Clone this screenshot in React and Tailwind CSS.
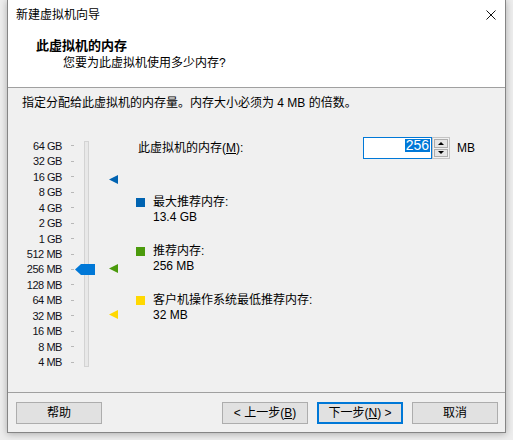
import React from "react";

const labels = ["64 GB","32 GB","16 GB","8 GB","4 GB","2 GB","1 GB","512 MB","256 MB","128 MB","64 MB","32 MB","16 MB","8 MB","4 MB"];

function Tri({ color, top }) {
  return (
    <svg className="absolute left-0" style={{ top }} width="9" height="9" viewBox="0 0 9 9">
      <polygon points="0,4.5 9,0 9,9" fill={color} />
    </svg>
  );
}

function Btn({ children, primary }) {
  return (
    <div
      className={
        "w-[86px] h-[22px] flex items-center justify-center bg-[#e1e1e1] text-[12px] leading-[16px] text-black " +
        (primary ? "border-2 border-[#0078d7]" : "border border-[#adadad]")
      }
    >
      {children}
    </div>
  );
}

export default function App() {
  return (
    <div className="w-[513px] h-[440px] bg-[#ededed] font-['Liberation_Sans','Noto_Sans_CJK_SC',sans-serif] text-black text-[12px] overflow-hidden">
      <div className="ml-[7px] w-[499px] h-[433px] border-x border-b border-[#858585] bg-[#f0f0f0] flex flex-col shadow-[0_1px_7px_rgba(0,0,0,0.28)]">
        {/* title bar */}
        <div className="h-[30px] bg-white flex items-center justify-between pl-[8px]">
          <span className="leading-[16px]">新建虚拟机向导</span>
          <svg className="mr-[9px]" width="10" height="10" viewBox="0 0 10 10">
            <path d="M0.5 0.5 L9.5 9.5 M9.5 0.5 L0.5 9.5" stroke="#111" strokeWidth="1" fill="none" />
          </svg>
        </div>
        {/* header */}
        <div className="h-[57px] bg-white pl-[28px] pt-[8px] flex flex-col">
          <span className="text-[13px] font-bold leading-[16px]">此虚拟机的内存</span>
          <span className="ml-[27px] mt-[1px] leading-[16px]">您要为此虚拟机使用多少内存?</span>
        </div>
        <div className="h-px bg-[#a0a0a0]" />
        {/* body */}
        <div className="h-[304px] flex flex-col">
          <div className="pl-[14px] pt-[7px] leading-[16px]">指定分配给此虚拟机的内存量。内存大小必须为 4 MB 的倍数。</div>
          <div className="mt-[27px] flex items-start">
            {/* ruler */}
            <div className="flex flex-col">
              {labels.map((l) => (
                <div key={l} className="h-[15.47px] flex items-center">
                  <span className="w-[54px] text-right text-[11px] tracking-[-0.45px] leading-[12px] text-[#101018]">{l}</span>
                  <span className="ml-[9px] w-[3px] h-px bg-[#b8b8b8]" />
                </div>
              ))}
            </div>
            {/* track */}
            <div className="relative ml-[10px] mt-[3px] w-[5px] h-[226px] border border-[#d3d3d3] bg-[#e8e8e8]">
              <svg className="absolute left-[-10px] top-[122px]" width="20" height="11" viewBox="0 0 20 11">
                <polygon points="0,5.5 6,0 20,0 20,11 6,11" fill="#0078d7" />
              </svg>
            </div>
            {/* markers */}
            <div className="relative ml-[20px] w-[9px] h-[232px]">
              <Tri color="#0063b1" top={37} />
              <Tri color="#4b9a0c" top={126} />
              <Tri color="#ffd800" top={172} />
            </div>
            {/* right section */}
            <div className="ml-[18px] flex flex-col">
              <div className="mt-[-1px] h-[22px] flex items-center">
                <span className="pl-[2px] w-[227px] leading-[16px]">
                  此虚拟机的内存(<span className="underline">M</span>):
                </span>
                <div className="w-[69px] h-[22px] border border-[#0078d7] bg-white flex justify-end items-start pt-px pr-px">
                  <span className="bg-[#0078d7] text-white px-[1px] text-[14px] leading-[13px]">256</span>
                </div>
                <div className="w-[18px] h-[22px] border border-[#c4c4c4] bg-[#f0f0f0] flex flex-col p-px gap-px">
                  <div className="flex-1 border border-[#adadad] bg-[#e5e5e5] flex items-center justify-center">
                    <svg width="6" height="3" viewBox="0 0 6 3"><polygon points="0,3 3,0 6,3" fill="#000" /></svg>
                  </div>
                  <div className="flex-1 border border-[#adadad] bg-[#e5e5e5] flex items-center justify-center">
                    <svg width="6" height="3" viewBox="0 0 6 3"><polygon points="0,0 6,0 3,3" fill="#000" /></svg>
                  </div>
                </div>
                <span className="ml-[7px] leading-[16px]">MB</span>
              </div>
              <div className="mt-[36px] flex items-start">
                <span className="mt-[3px] w-[9px] h-[9px] bg-[#0063b1]" />
                <div className="ml-[8px] flex flex-col leading-[15px]">
                  <span>最大推荐内存:</span>
                  <span>13.4 GB</span>
                </div>
              </div>
              <div className="mt-[19px] flex items-start">
                <span className="mt-[3px] w-[9px] h-[9px] bg-[#4b9a0c]" />
                <div className="ml-[8px] flex flex-col leading-[15px]">
                  <span>推荐内存:</span>
                  <span>256 MB</span>
                </div>
              </div>
              <div className="mt-[19px] flex items-start">
                <span className="mt-[3px] w-[9px] h-[9px] bg-[#ffd800]" />
                <div className="ml-[8px] flex flex-col leading-[15px]">
                  <span>客户机操作系统最低推荐内存:</span>
                  <span>32 MB</span>
                </div>
              </div>
            </div>
          </div>
        </div>
        <div className="h-px bg-[#a0a0a0]" />
        {/* footer */}
        <div className="flex-1 flex justify-between items-start pt-[9px] pl-[8px] pr-[7px]">
          <Btn>帮助</Btn>
          <div className="flex gap-[9px]">
            <Btn>&lt; 上一步(<span className="underline">B</span>)</Btn>
            <Btn primary>下一步(<span className="underline">N</span>) &gt;</Btn>
            <Btn>取消</Btn>
          </div>
        </div>
      </div>
    </div>
  );
}
